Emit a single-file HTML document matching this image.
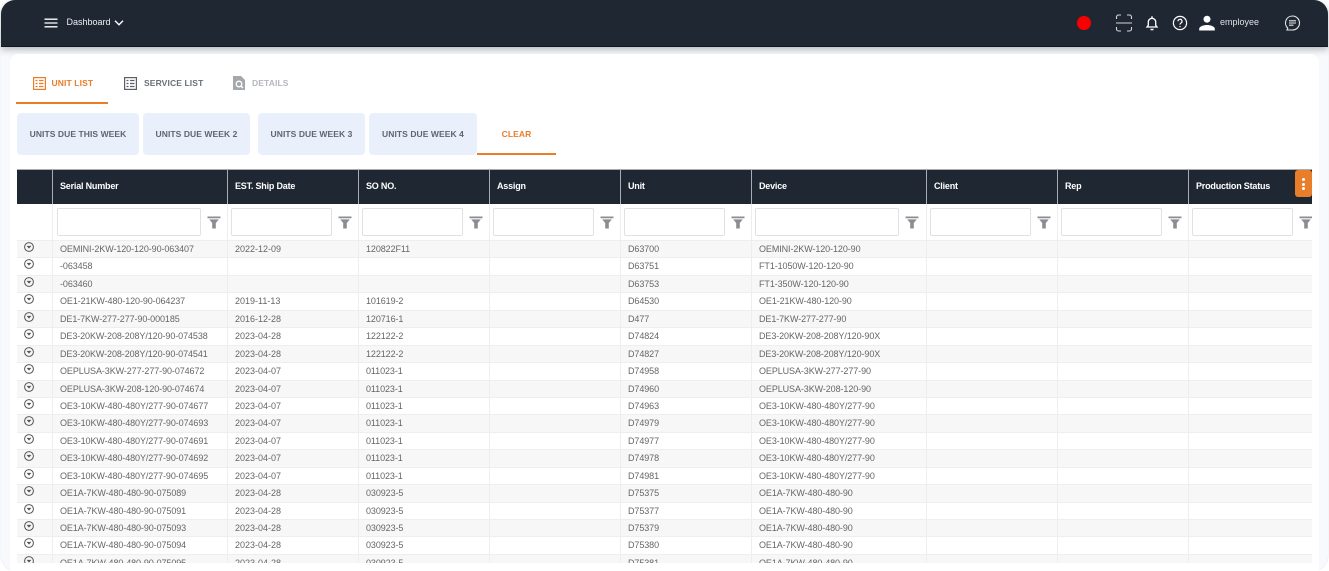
<!DOCTYPE html>
<html><head><meta charset="utf-8"><title>Dashboard</title>
<style>
html,body{margin:0;padding:0;background:#fff}
body{width:1329px;height:571px;position:relative;overflow:hidden;font-family:"Liberation Sans",sans-serif}
div,span,svg{position:absolute;box-sizing:border-box}
.bg{left:1px;top:30px;width:1327px;height:541px;background:#f8f9fc;border-radius:0 0 15px 15px;border-bottom:0;box-shadow:0 0 1px #c8c8c8}
.nav{left:1px;top:0;width:1327px;height:47px;background:#1f2733;border-radius:14px 14px 0 0;box-shadow:0 3px 7px rgba(40,50,60,.3);border-bottom:1px solid #12171f}
.card{left:10px;top:54px;width:1309px;height:517px;background:#fff;border-radius:9px 9px 0 0}
.nt{color:#eef0f2;font-size:9px;white-space:nowrap;line-height:12px}
.tab{font-size:8.5px;font-weight:bold;letter-spacing:.12px;top:77px;line-height:12px;white-space:nowrap}
.btn{top:113px;height:42px;background:#eaf0fb;border-radius:4px;color:#5f6670;font-size:8.5px;font-weight:bold;letter-spacing:.07px;text-align:center;line-height:42px;white-space:nowrap}
.tbl{left:17px;top:169px;width:1295px;height:394px;overflow:hidden;background:#fff}
.hd{left:0;top:0;width:1295px;height:35px;background:#1f2733;border-top:1px solid #a9adb1}
.h{top:10px;color:#fff;font-size:9px;font-weight:bold;letter-spacing:-.2px;white-space:nowrap;line-height:12px}
.vh{top:0;width:1px;height:35px;background:#a9adb1}
.vb{top:35px;width:1px;height:360px;background:#eeeeee;z-index:3}
.inp{top:39px;height:28px;background:#fff;border:1px solid #dfe1e3;border-radius:2px}
.f{top:47px;width:14px;height:13px}
.rows{left:0;top:71px;width:1295px}
.r{position:relative;display:block;left:0;width:1295px;height:17.45px;border-top:1.5px solid #eeeeee;color:#666;font-size:9px;letter-spacing:-.09px;line-height:15px;white-space:nowrap}
.r.g{background:#f7f7f7}
.r span{top:1px}
.b{letter-spacing:0}
.a{left:43px}.b{left:218px}.c{left:349px}.d{left:611px}.e{left:742px}
.r svg{left:7px;top:1px;width:10px;height:10px}
.more{left:1295px;top:170px;width:17px;height:27px;background:#e87d2a;border-radius:3px;z-index:5}
.more i{position:absolute;left:7px;width:3px;height:3px;border-radius:50%;background:#fff}
</style></head>
<body>
<svg width="0" height="0" style="left:0;top:0"><defs>
<symbol id="ch" viewBox="0 0 10 10"><circle cx="5" cy="5" r="4.4" fill="none" stroke="#555" stroke-width="1"/><path d="M2.6 3.9h4.8L5 6.6z" fill="#555"/></symbol>
<symbol id="fn" viewBox="0 0 14 13"><path d="M0.5 0.5h13v1.8h-13zM2.2 3.4h9.6L8.8 7v5.5H5.2V7z" fill="#8a8d91"/></symbol>
</defs></svg>
<div class="bg"></div>
<div class="nav"></div>
<svg style="left:44px;top:18px" width="14" height="10" viewBox="0 0 14 10"><path d="M0.5 1.2h13M0.5 5h13M0.5 8.8h13" stroke="#fff" stroke-width="1.3"/></svg>
<div class="nt" style="left:66.500px;top:16px">Dashboard</div>
<svg style="left:114px;top:19px" width="10" height="8" viewBox="0 0 10 8"><path d="M1 1.8l4 4 4-4" fill="none" stroke="#fff" stroke-width="1.4"/></svg>
<div style="left:1077px;top:16px;width:14px;height:14px;border-radius:50%;background:#f80000"></div>
<svg style="left:1115px;top:14px" width="18" height="18" viewBox="0 0 18 18" fill="none" stroke="#d5d7da" stroke-width="1.1"><path d="M1.5 5V3a2 2 0 0 1 2-2h2.500M12 1h2.500a2 2 0 0 1 2 2v2M1.500 13v2a2 2 0 0 0 2 2h2.500M12 17h2.500a2 2 0 0 0 2-2v-2M1 9h16"/></svg>
<svg style="left:1145px;top:15px" width="14" height="16" viewBox="0 0 14 16" fill="none" stroke="#fff" stroke-width="1.300"><path d="M2 12h10l-1.300-1.700V7a3.700 3.700 0 0 0-7.400 0v3.300z"/><path d="M7 1.200v2M5.500 14.500h3" stroke-width="1.400"/></svg>
<svg style="left:1172px;top:15px" width="16" height="16" viewBox="0 0 16 16" fill="none" stroke="#fff" stroke-width="1.200"><circle cx="8" cy="8" r="6.600"/><path d="M6 6.300a2 2 0 1 1 3 1.700c-.7.400-1 .8-1 1.600"/><path d="M8 11v1.200"/></svg>
<svg style="left:1199px;top:15px" width="16" height="16" viewBox="0 0 16 16" fill="#fff"><circle cx="8" cy="4.200" r="3.500"/><path d="M0.200 15.500v-1.700c0-2.600 5-3.800 7.800-3.800s7.800 1.200 7.800 3.800v1.700z"/></svg>
<div class="nt" style="left:1220px;top:16px;color:#dfe1e3">employee</div>
<svg style="left:1284px;top:15px" width="17" height="17" viewBox="0 0 17 17" fill="none" stroke="#e6e8ea" stroke-width="1.100"><path d="M8.500 1a7 7 0 0 1 7 7 7 7 0 0 1-7 7H3l.8-1.800A7 7 0 0 1 8.500 1z"/><path d="M5 5.800h7M5 8h7M5 10.200h4.500"/></svg>

<div class="card"></div>
<svg style="left:33px;top:77px" width="13" height="13" viewBox="0 0 13 13" fill="none" stroke="#e87d2a"><rect x=".6" y=".6" width="11.800" height="11.800" stroke-width="1.200"/><path d="M2.500 3.500h2M2.500 6.500h2M2.500 9.500h2M6 3.500h4.500M6 6.500h4.500M6 9.500h4.500" stroke-width="1.300"/></svg>
<div class="tab" style="left:51.500px;color:#e87d2a">UNIT LIST</div>
<svg style="left:124px;top:77px" width="13" height="13" viewBox="0 0 13 13" fill="none" stroke="#5b6068"><rect x=".6" y=".6" width="11.800" height="11.800" stroke-width="1.200"/><path d="M2.500 3.500h2M2.500 6.500h2M2.500 9.500h2M6 3.500h4.500M6 6.500h4.500M6 9.500h4.500" stroke-width="1.300"/></svg>
<div class="tab" style="left:144px;color:#6a7078">SERVICE LIST</div>
<svg style="left:233px;top:76px" width="12" height="14" viewBox="0 0 12 14"><path d="M0 0h8l4 4v10H0z" fill="#a4a7ab"/><circle cx="6" cy="8" r="2.800" fill="none" stroke="#fff" stroke-width="1.300"/><path d="M8 10l2 2" stroke="#fff" stroke-width="1.300"/></svg>
<div class="tab" style="left:252px;color:#b4b7bb">DETAILS</div>
<div style="left:16px;top:102px;width:92px;height:2px;background:#e87d2a"></div>

<div class="btn" style="left:17px;width:122px">UNITS DUE THIS WEEK</div>
<div class="btn" style="left:143px;width:107px">UNITS DUE WEEK 2</div>
<div class="btn" style="left:258px;width:107px">UNITS DUE WEEK 3</div>
<div class="btn" style="left:369px;width:108px">UNITS DUE WEEK 4</div>
<div class="btn" style="left:477px;width:79px;height:42px;background:#fff;color:#e87d2a;border-bottom:2px solid #e87d2a;line-height:42px;border-radius:0">CLEAR</div>

<div class="tbl">
<div class="hd">
<div class="vh" style="left:35px"></div><div class="vh" style="left:210px"></div><div class="vh" style="left:341px"></div><div class="vh" style="left:472px"></div><div class="vh" style="left:603px"></div><div class="vh" style="left:734px"></div><div class="vh" style="left:909px"></div><div class="vh" style="left:1040px"></div><div class="vh" style="left:1171px"></div>
<div class="h" style="left:43px">Serial Number</div>
<div class="h" style="left:218px">EST. Ship Date</div>
<div class="h" style="left:349px">SO NO.</div>
<div class="h" style="left:480px">Assign</div>
<div class="h" style="left:611px">Unit</div>
<div class="h" style="left:742px">Device</div>
<div class="h" style="left:917px">Client</div>
<div class="h" style="left:1048px">Rep</div>
<div class="h" style="left:1179px">Production Status</div>
</div>
<div class="vb" style="left:35px"></div><div class="vb" style="left:210px"></div><div class="vb" style="left:341px"></div><div class="vb" style="left:472px"></div><div class="vb" style="left:603px"></div><div class="vb" style="left:734px"></div><div class="vb" style="left:909px"></div><div class="vb" style="left:1040px"></div><div class="vb" style="left:1171px"></div>
<div class="inp" style="left:40px;width:144px"></div><svg class="f" style="left:190px"><use href="#fn"/></svg>
<div class="inp" style="left:214px;width:101px"></div><svg class="f" style="left:321px"><use href="#fn"/></svg>
<div class="inp" style="left:345px;width:101px"></div><svg class="f" style="left:452px"><use href="#fn"/></svg>
<div class="inp" style="left:476px;width:101px"></div><svg class="f" style="left:583px"><use href="#fn"/></svg>
<div class="inp" style="left:607px;width:101px"></div><svg class="f" style="left:714px"><use href="#fn"/></svg>
<div class="inp" style="left:738px;width:144px"></div><svg class="f" style="left:888px"><use href="#fn"/></svg>
<div class="inp" style="left:913px;width:101px"></div><svg class="f" style="left:1020px"><use href="#fn"/></svg>
<div class="inp" style="left:1044px;width:101px"></div><svg class="f" style="left:1151px"><use href="#fn"/></svg>
<div class="inp" style="left:1175px;width:101px"></div><svg class="f" style="left:1282px"><use href="#fn"/></svg>
<div class="rows">
<div class="r g"><svg><use href="#ch"/></svg><span class="a">OEMINI-2KW-120-120-90-063407</span><span class="b">2022-12-09</span><span class="c">120822F11</span><span class="d">D63700</span><span class="e">OEMINI-2KW-120-120-90</span></div>
<div class="r"><svg><use href="#ch"/></svg><span class="a">-063458</span><span class="d">D63751</span><span class="e">FT1-1050W-120-120-90</span></div>
<div class="r g"><svg><use href="#ch"/></svg><span class="a">-063460</span><span class="d">D63753</span><span class="e">FT1-350W-120-120-90</span></div>
<div class="r"><svg><use href="#ch"/></svg><span class="a">OE1-21KW-480-120-90-064237</span><span class="b">2019-11-13</span><span class="c">101619-2</span><span class="d">D64530</span><span class="e">OE1-21KW-480-120-90</span></div>
<div class="r g"><svg><use href="#ch"/></svg><span class="a">DE1-7KW-277-277-90-000185</span><span class="b">2016-12-28</span><span class="c">120716-1</span><span class="d">D477</span><span class="e">DE1-7KW-277-277-90</span></div>
<div class="r"><svg><use href="#ch"/></svg><span class="a">DE3-20KW-208-208Y/120-90-074538</span><span class="b">2023-04-28</span><span class="c">122122-2</span><span class="d">D74824</span><span class="e">DE3-20KW-208-208Y/120-90X</span></div>
<div class="r g"><svg><use href="#ch"/></svg><span class="a">DE3-20KW-208-208Y/120-90-074541</span><span class="b">2023-04-28</span><span class="c">122122-2</span><span class="d">D74827</span><span class="e">DE3-20KW-208-208Y/120-90X</span></div>
<div class="r"><svg><use href="#ch"/></svg><span class="a">OEPLUSA-3KW-277-277-90-074672</span><span class="b">2023-04-07</span><span class="c">011023-1</span><span class="d">D74958</span><span class="e">OEPLUSA-3KW-277-277-90</span></div>
<div class="r g"><svg><use href="#ch"/></svg><span class="a">OEPLUSA-3KW-208-120-90-074674</span><span class="b">2023-04-07</span><span class="c">011023-1</span><span class="d">D74960</span><span class="e">OEPLUSA-3KW-208-120-90</span></div>
<div class="r"><svg><use href="#ch"/></svg><span class="a">OE3-10KW-480-480Y/277-90-074677</span><span class="b">2023-04-07</span><span class="c">011023-1</span><span class="d">D74963</span><span class="e">OE3-10KW-480-480Y/277-90</span></div>
<div class="r g"><svg><use href="#ch"/></svg><span class="a">OE3-10KW-480-480Y/277-90-074693</span><span class="b">2023-04-07</span><span class="c">011023-1</span><span class="d">D74979</span><span class="e">OE3-10KW-480-480Y/277-90</span></div>
<div class="r"><svg><use href="#ch"/></svg><span class="a">OE3-10KW-480-480Y/277-90-074691</span><span class="b">2023-04-07</span><span class="c">011023-1</span><span class="d">D74977</span><span class="e">OE3-10KW-480-480Y/277-90</span></div>
<div class="r g"><svg><use href="#ch"/></svg><span class="a">OE3-10KW-480-480Y/277-90-074692</span><span class="b">2023-04-07</span><span class="c">011023-1</span><span class="d">D74978</span><span class="e">OE3-10KW-480-480Y/277-90</span></div>
<div class="r"><svg><use href="#ch"/></svg><span class="a">OE3-10KW-480-480Y/277-90-074695</span><span class="b">2023-04-07</span><span class="c">011023-1</span><span class="d">D74981</span><span class="e">OE3-10KW-480-480Y/277-90</span></div>
<div class="r g"><svg><use href="#ch"/></svg><span class="a">OE1A-7KW-480-480-90-075089</span><span class="b">2023-04-28</span><span class="c">030923-5</span><span class="d">D75375</span><span class="e">OE1A-7KW-480-480-90</span></div>
<div class="r"><svg><use href="#ch"/></svg><span class="a">OE1A-7KW-480-480-90-075091</span><span class="b">2023-04-28</span><span class="c">030923-5</span><span class="d">D75377</span><span class="e">OE1A-7KW-480-480-90</span></div>
<div class="r g"><svg><use href="#ch"/></svg><span class="a">OE1A-7KW-480-480-90-075093</span><span class="b">2023-04-28</span><span class="c">030923-5</span><span class="d">D75379</span><span class="e">OE1A-7KW-480-480-90</span></div>
<div class="r"><svg><use href="#ch"/></svg><span class="a">OE1A-7KW-480-480-90-075094</span><span class="b">2023-04-28</span><span class="c">030923-5</span><span class="d">D75380</span><span class="e">OE1A-7KW-480-480-90</span></div>
<div class="r g"><svg><use href="#ch"/></svg><span class="a">OE1A-7KW-480-480-90-075095</span><span class="b">2023-04-28</span><span class="c">030923-5</span><span class="d">D75381</span><span class="e">OE1A-7KW-480-480-90</span></div>
</div>
</div>
<div class="more"><i style="top:8px"></i><i style="top:12.500px"></i><i style="top:17px"></i></div>
</body></html>
